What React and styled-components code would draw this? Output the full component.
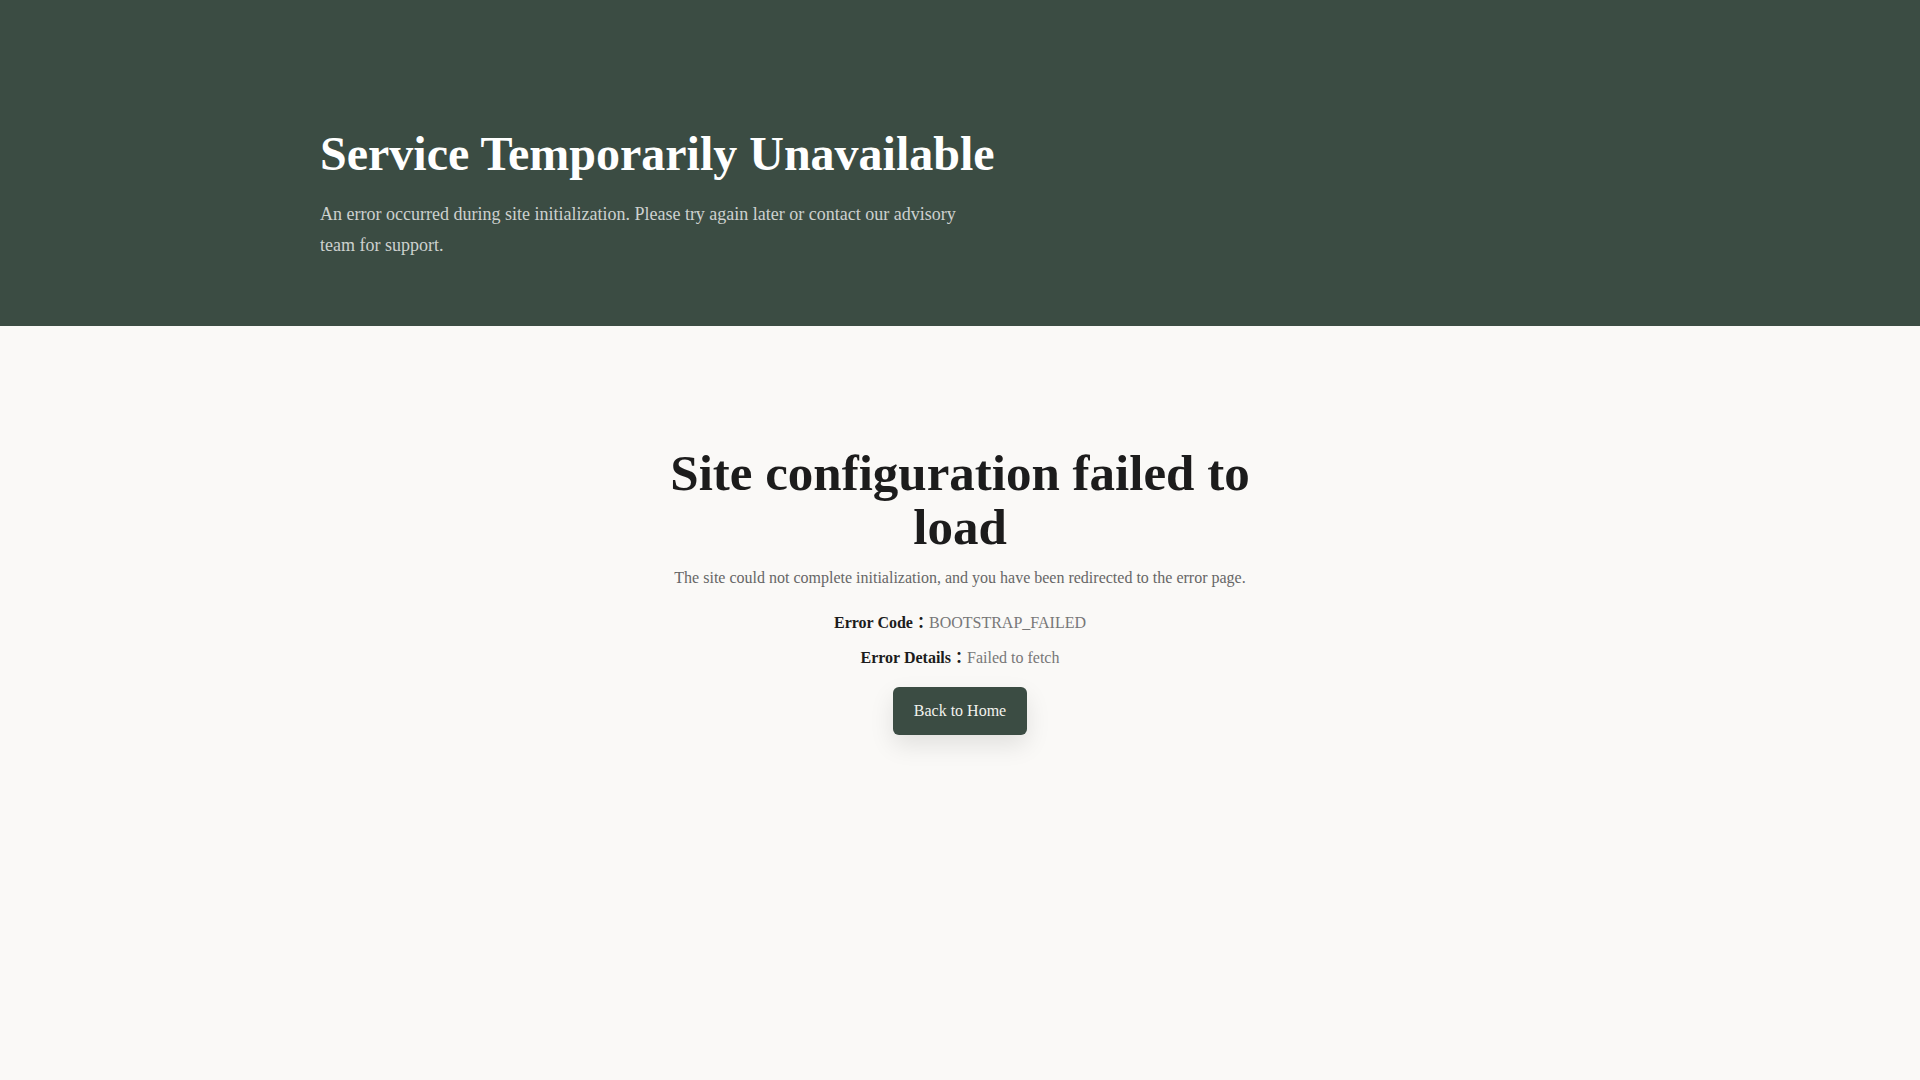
import React from "react"
import styled, { createGlobalStyle } from "styled-components"

const GlobalStyle = createGlobalStyle`
    html, body {
        margin: 0;
        padding: 0;
        background: #faf9f7;
        font-family: "Liberation Serif", "Times New Roman", "Noto Sans CJK TC", serif;
        color: #1c1c1c;
    }
    * {
        box-sizing: border-box;
    }
`

const Page = styled.div`
    min-height: 100vh;
    background: #faf9f7;
`

const Hero = styled.header`
    background: #3b4c43;
    color: #ffffff;
    padding: 125px 0 64px;
`

const Container = styled.div`
    max-width: 1280px;
    margin: 0 auto;
`

const HeroTitle = styled.h1`
    margin: 0 0 16px;
    font-size: 48px;
    line-height: 1.2;
    font-weight: 700;
`

const HeroText = styled.p`
    margin: 0;
    max-width: 650px;
    font-size: 18px;
    line-height: 1.75;
    color: rgba(255, 255, 255, 0.75);
`

const Main = styled.main`
    display: flex;
    justify-content: center;
    padding: 120px 24px;
`

const ErrorCard = styled.section`
    max-width: 640px;
    display: flex;
    flex-direction: column;
    align-items: center;
    text-align: center;
`

const ErrorTitle = styled.h2`
    margin: 0 0 12px;
    font-size: 51px;
    line-height: 54px;
    font-weight: 700;
    color: #1c1c1c;
`

const ErrorText = styled.p`
    margin: 0 0 21px;
    font-size: 16px;
    line-height: 24px;
    color: #666666;
`

const DetailRow = styled.p`
    margin: 0 0 11px;
    font-size: 16px;
    line-height: 24px;
    color: #777777;
`

const Label = styled.strong`
    color: #1c1c1c;
    font-weight: 700;
`

const Colon = styled.span`
    font-family: "Noto Sans CJK TC", "Noto Sans CJK JP", sans-serif;
    font-weight: 700;
    line-height: 0;
`

const HomeButton = styled.a`
    margin-top: 6px;
    display: inline-block;
    padding: 14px 21px;
    font-size: 16px;
    line-height: 20px;
    color: #f2f2ee;
    background: #3b4c43;
    border-radius: 6px;
    text-decoration: none;
    box-shadow: 0 10px 24px rgba(0, 0, 0, 0.1);
    cursor: pointer;
`

export default function App() {
    return (
        <Page>
            <GlobalStyle />
            <Hero>
                <Container>
                    <HeroTitle>Service Temporarily Unavailable</HeroTitle>
                    <HeroText>
                        An error occurred during site initialization. Please try again later or contact our advisory team for support.
                    </HeroText>
                </Container>
            </Hero>
            <Main>
                <ErrorCard>
                    <ErrorTitle>Site configuration failed to load</ErrorTitle>
                    <ErrorText>The site could not complete initialization, and you have been redirected to the error page.</ErrorText>
                    <DetailRow><Label>Error Code<Colon>：</Colon></Label>BOOTSTRAP_FAILED</DetailRow>
                    <DetailRow><Label>Error Details<Colon>：</Colon></Label>Failed to fetch</DetailRow>
                    <HomeButton href="/">Back to Home</HomeButton>
                </ErrorCard>
            </Main>
        </Page>
    )
}
